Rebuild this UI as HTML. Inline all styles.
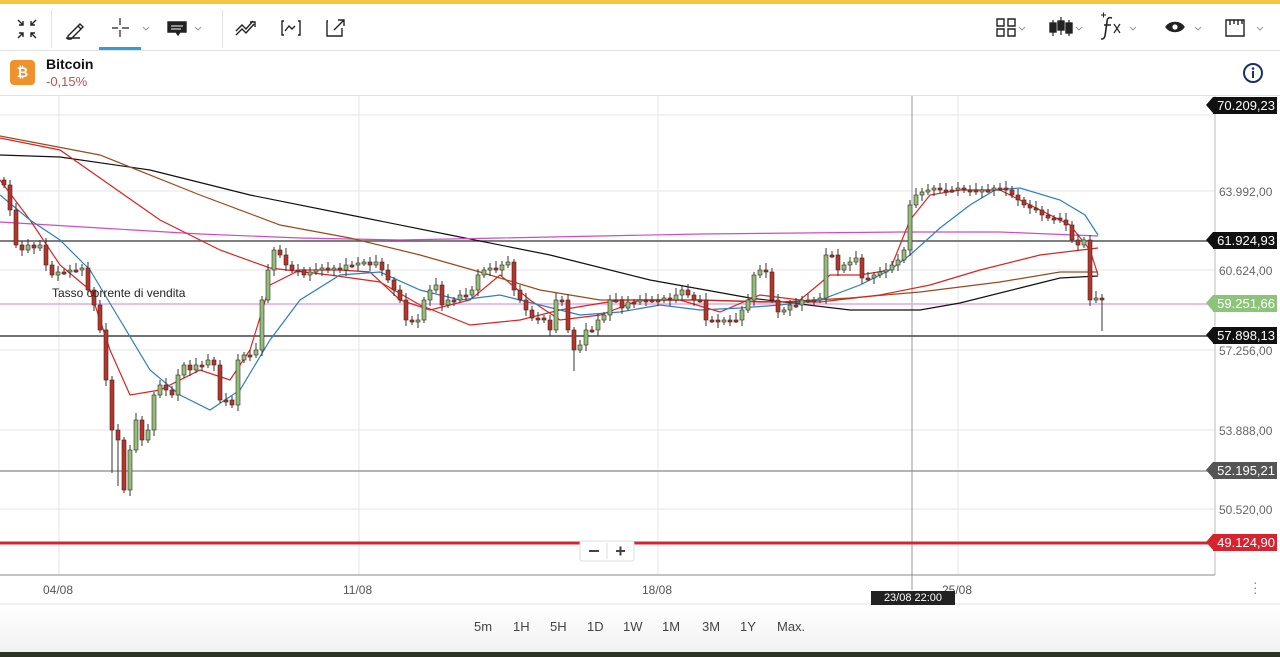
<!DOCTYPE html>
<html><head><meta charset="utf-8"><style>
*{margin:0;padding:0;box-sizing:border-box}
body{width:1280px;height:657px;overflow:hidden;background:#fff;font-family:"Liberation Sans",Arial,sans-serif;position:relative;color:#222}
.abs{position:absolute}
.lbl{position:absolute;right:3px;height:17px;line-height:17px;font-size:13px;color:#fff;background:#111;padding:0 2px 0 4px}
.lbl:before{content:"";position:absolute;left:-7px;top:0;border-right:7px solid #111;border-top:8.5px solid transparent;border-bottom:8.5px solid transparent}
.ax{position:absolute;left:1219px;font-size:12px;color:#666}
.tf{position:absolute;top:619px;font-size:13px;color:#444}
</style></head><body>
<div class="abs" style="left:0;top:0;width:1280px;height:4px;background:#f6c443"></div>
<div class="abs" style="left:0;top:50px;width:1280px;height:1px;background:#e2e2e2"></div>
<div class="abs" style="left:51px;top:10px;width:1px;height:38px;background:#e2e2e2"></div>
<div class="abs" style="left:222px;top:10px;width:1px;height:38px;background:#e2e2e2"></div>
<div class="abs" style="left:99px;top:47px;width:42px;height:3px;background:#2a9fd8"></div>
<svg class="abs" style="left:0;top:0" width="1280" height="50" fill="none" stroke="#222" stroke-width="1.4">
<path d="M18 20l5 5M23 21v4h-4M36 20l-5 5M31 21v4h4M18 38l5-5M19 33h4v4M36 38l-5-5M35 33h-4v4"/>
<path d="M68 36l12-12 3 3-12 12h-3zM78 26l3 3M66 38h14" />
<path d="M120 18v7M120 30v7M112 28h6M122 28h7" stroke="#444"/>
<path d="M143 27l3 3 3-3M195 27l3 3 3-3M1019 27l3 3 3-3M1076 27l3 3 3-3M1130 27l3 3 3-3M1195 27l3 3 3-3M1257 27l3 3 3-3" stroke="#999" stroke-width="1"/>
<path d="M168 22h18v10h-6l-2 3-2-3h-8z" fill="#222"/><path d="M171 26h12M171 29h10" stroke="#fff" stroke-width="1"/>
<path d="M236 35l6-6 4 4 8-9M236 31l6-6 4 4 7-8M250 22h5v5"/>
<path d="M284 21h-2v14h2M298 21h2v14h-2M285 31l4-5 3 3 3-3"/>
<path d="M328 21h-1v15h15v-8M334 30l10-10M338 20h6v6"/>
<path d="M997 19h7v7h-7zM1008 19h7v7h-7zM997 29h7v7h-7zM1008 29h7v7h-7z"/>
<path d="M1053 20v16M1061 17v18M1069 20v16" stroke-width="1.2"/><rect x="1050" y="23" width="6" height="9" fill="#222"/><rect x="1058" y="21" width="6" height="9" fill="#222"/><rect x="1066" y="23" width="6" height="10" fill="#222"/>
<path d="M1166 27c4-6 14-6 18 0-4 6-14 6-18 0z" fill="#222"/><circle cx="1175" cy="27" r="2.6" fill="#fff" stroke="none"/>
<path d="M1226 20h18v16h-18zM1230 20v5M1234 20v4M1238 20v5M1242 20v4"/>
<path d="M1112 18c-3-1-5 0-5 4l-2 14c-1 3-2 3-4 3M1104 25h7" stroke-width="1.6"/>
<path d="M1114 24l6 9M1120 24l-6 9" stroke-width="1.2"/>
<path d="M1101 15h5M1103.5 12.5v5" stroke-width="1.1"/>
</svg>
<div class="abs" style="left:10px;top:60px;width:25px;height:25px;background:#f0922b;border-radius:4px;color:#fff;font-weight:bold;font-size:14px;text-align:center;line-height:25px">₿</div>
<div class="abs" style="left:46px;top:56px;font-size:14px;font-weight:bold;color:#111">Bitcoin</div>
<div class="abs" style="left:46px;top:74px;font-size:13px;color:#c0504d">-0,15%</div>
<svg class="abs" style="left:1242px;top:62px" width="22" height="22"><circle cx="11" cy="11" r="9" fill="none" stroke="#1a2f6b" stroke-width="2"/><rect x="10" y="9" width="2" height="7" fill="#1a2f6b"/><circle cx="11" cy="6.5" r="1.3" fill="#1a2f6b"/></svg>
<div class="abs" style="left:0;top:95px;width:1280px;height:1px;background:#e2e2e2"></div>
<svg class="abs" style="left:0;top:0" width="1280" height="657" id="ch">
<g stroke="#e6e6e6"><line x1="0" y1="191" x2="1215" y2="191"/><line x1="0" y1="270" x2="1215" y2="270"/><line x1="0" y1="350" x2="1215" y2="350"/><line x1="0" y1="430" x2="1215" y2="430"/><line x1="0" y1="509" x2="1215" y2="509"/><line x1="0" y1="115" x2="1215" y2="115"/>
<line x1="59" y1="96" x2="59" y2="575"/><line x1="359" y1="96" x2="359" y2="575"/><line x1="658" y1="96" x2="658" y2="575"/><line x1="958" y1="96" x2="958" y2="575"/></g>
<line x1="912" y1="96" x2="912" y2="590" stroke="#999"/>
<line x1="1215" y1="96" x2="1215" y2="575" stroke="#bbb"/>
<line x1="0" y1="575" x2="1215" y2="575" stroke="#888"/>
<line x1="0" y1="604" x2="1280" y2="604" stroke="#e2e2e2"/>
<line x1="0" y1="241" x2="1215" y2="241" stroke="#555" stroke-width="1.5"/>
<line x1="0" y1="304" x2="1215" y2="304" stroke="#e8a6e0" stroke-width="1.5"/>
<line x1="0" y1="336" x2="1215" y2="336" stroke="#444" stroke-width="1.5"/>
<line x1="0" y1="471" x2="1215" y2="471" stroke="#888" stroke-width="1.2"/>
<line x1="0" y1="543" x2="1215" y2="543" stroke="#d8232f" stroke-width="3"/>
<g fill="none" stroke-width="1.2">
<polyline stroke="#111" points="0,155 60,157 150,170 250,195 350,215 450,235 550,255 650,280 750,298 850,310 920,310 960,303 1020,288 1060,278 1098,276"/>
<polyline stroke="#d14bc9" points="0,222 100,228 200,234 300,238 400,240 500,238 600,236 700,234 800,233 900,232 1000,232 1098,236"/>
<polyline stroke="#9a4a1a" points="0,136 100,155 200,195 280,225 350,238 420,255 480,272 540,290 600,300 700,300 780,302 850,298 920,292 1000,282 1060,272 1098,272"/>
<polyline stroke="#d22" points="0,138 60,150 110,185 160,220 220,250 270,268 330,275 380,282 420,305 470,325 520,320 560,310 620,300 700,300 760,302 820,302 880,295 930,285 980,270 1040,255 1098,248"/>
<polyline stroke="#d22" points="0,180 30,220 60,265 90,290 110,350 130,395 160,390 200,370 230,380 250,350 270,285 300,270 340,270 370,272 400,300 430,310 470,300 500,275 530,300 560,320 600,315 640,300 680,300 720,312 760,295 800,300 830,275 860,275 890,270 910,220 930,195 960,190 1000,190 1040,210 1070,225 1090,250 1098,275"/>
<polyline stroke="#2c7fc0" points="0,195 30,220 60,240 90,270 120,320 150,370 180,395 210,410 240,390 270,340 300,300 340,275 380,272 420,290 460,300 500,295 540,305 580,315 620,312 660,305 700,310 740,308 780,305 820,300 860,285 890,270 910,255 940,228 970,205 995,190 1020,188 1060,200 1085,215 1098,235"/>
</g>
<g id="cd"></g>
<rect x="580" y="541" width="54" height="20" fill="#fff" stroke="#ddd" rx="2"/>
<line x1="607" y1="543" x2="607" y2="559" stroke="#ddd"/>
<path d="M589 551h10M616 551h9M620.5 546.5v9" stroke="#444" stroke-width="2"/>
</svg>
<div class="abs" style="left:52px;top:286px;font-size:12px;color:#222">Tasso corrente di vendita</div>
<div class="ax" style="top:185px">63.992,00</div>
<div class="ax" style="top:264px">60.624,00</div>
<div class="ax" style="top:344px">57.256,00</div>
<div class="ax" style="top:424px">53.888,00</div>
<div class="ax" style="top:503px">50.520,00</div>
<div class="lbl" style="top:97px">70.209,23</div>
<div class="lbl" style="top:232px">61.924,93</div>
<div class="lbl" style="top:295px;background:#8cc47a">59.251,66</div>
<div class="lbl" style="top:327px">57.898,13</div>
<div class="lbl" style="top:462px;background:#555">52.195,21</div>
<div class="lbl" style="top:534px;background:#d8232f">49.124,90</div>
<style>.lbl[style*="8cc47a"]:before{border-right-color:#8cc47a}.lbl[style*="555"]:before{border-right-color:#555}.lbl[style*="d8232f"]:before{border-right-color:#d8232f}</style>
<div class="abs" style="left:43px;top:583px;font-size:12px;color:#555">04/08</div>
<div class="abs" style="left:343px;top:583px;font-size:12px;color:#555">11/08</div>
<div class="abs" style="left:642px;top:583px;font-size:12px;color:#555">18/08</div>
<div class="abs" style="left:942px;top:583px;font-size:12px;color:#555">25/08</div>
<div class="abs" style="left:871px;top:591px;width:84px;height:14px;background:#222;color:#fff;font-size:11px;text-align:center;line-height:14px">23/08 22:00</div>
<div class="abs" style="left:1253px;top:580px;font-size:14px;color:#888;line-height:5px">·<br>·<br>·</div>
<div class="abs" style="left:0;top:605px;width:1280px;height:47px;background:linear-gradient(#fff,#f1f1f1)"></div>
<div class="tf" style="left:474px">5m</div><div class="tf" style="left:513px">1H</div><div class="tf" style="left:550px">5H</div><div class="tf" style="left:587px">1D</div><div class="tf" style="left:623px">1W</div><div class="tf" style="left:662px">1M</div><div class="tf" style="left:702px">3M</div><div class="tf" style="left:740px">1Y</div><div class="tf" style="left:777px">Max.</div>
<div class="abs" style="left:0;top:652px;width:1280px;height:5px;background:#2c3322"></div>
<script>
var ys=[185,210,245,250,245,248,245,265,275,272,272,270,270,268,290,305,330,380,430,440,490,450,420,440,430,395,385,390,395,375,365,370,365,365,360,365,400,400,405,360,355,355,350,300,270,250,255,265,270,270,275,272,270,268,270,268,270,265,265,263,262,265,262,270,280,290,300,320,322,320,300,290,285,305,300,300,295,295,290,275,270,268,270,265,262,290,300,310,318,318,320,330,300,300,330,350,345,330,330,320,315,300,300,308,302,302,300,300,300,300,298,300,295,290,295,300,300,320,320,322,320,320,320,310,300,275,270,272,300,312,310,305,305,300,300,300,298,255,255,270,265,262,258,278,278,275,272,270,265,260,250,205,195,192,190,188,190,190,190,188,190,190,192,190,190,188,188,190,195,200,205,208,210,215,218,218,220,225,240,245,240,300,298,300];
var s='',p=180;
for(var i=0;i<ys.length;i++){var x=i*6+2,c=ys[i],o=p,t=Math.min(o,c),b=Math.max(o,c),h=Math.max(b-t,2),up=c<o;
var w1=t-3-((i*7)%5),w2=b+3+((i*3)%6);if(i==18||i==19)w2+=40;if(i==95)w2+=15;if(i==183)w2+=25;
s+='<line x1="'+(x+2)+'" y1="'+w1+'" x2="'+(x+2)+'" y2="'+w2+'" stroke="#333"/>';
s+='<rect x="'+x+'" y="'+t+'" width="4" height="'+h+'" fill="'+(up?'#8fbf78':'#b8342a')+'" stroke="#3a2a22" stroke-width="0.6"/>';p=c;}
document.getElementById('cd').innerHTML=s;
</script>
</body></html>
